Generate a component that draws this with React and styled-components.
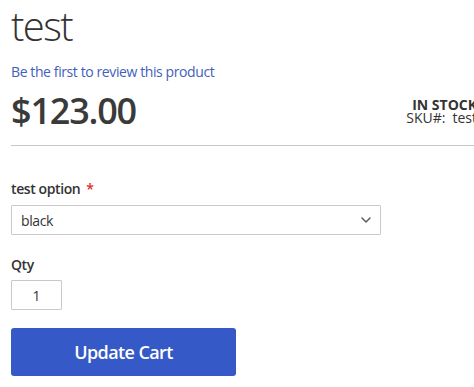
import React from "react";
import styled, { createGlobalStyle } from "styled-components";

const GlobalStyle = createGlobalStyle`
  html, body {
    margin: 0;
    padding: 0;
    background: #fff;
    overflow: hidden;
  }
  body {
    font-family: "Open Sans", "Noto Sans", Arial, sans-serif;
    color: #333;
    font-size: 14px;
    letter-spacing: -0.4px;
  }
`;

const Page = styled.div`
  width: 466px;
  padding: 1px 0 0 11px;
`;

const Title = styled.h1`
  margin: 0;
  font-size: 40px;
  line-height: 50px;
  font-weight: 300;
  letter-spacing: -1.6px;
  color: #333;
`;

const ReviewLink = styled.a`
  display: block;
  margin-top: 11px;
  font-size: 14px;
  line-height: 20px;
  color: #4260bb;
  text-decoration: none;
`;

const PriceRow = styled.div`
  display: flex;
  justify-content: space-between;
  align-items: flex-start;
  padding-bottom: 14px;
  border-bottom: 1px solid #c8c8c8;
`;

const Price = styled.div`
  margin-top: 9px;
  font-size: 36px;
  line-height: 40px;
  font-weight: 600;
  letter-spacing: -1.2px;
  color: #3a3a3a;
`;

const Stock = styled.div`
  padding-top: 16px;
  text-align: right;
  font-size: 14px;
  line-height: 13px;
`;

const StockStatus = styled.div`
  font-weight: 700;
  text-transform: uppercase;
  letter-spacing: 0;
  color: #333;
`;

const Sku = styled.div`
  color: #333;
  letter-spacing: 0;

  span {
    margin-left: 7px;
  }
`;

const Field = styled.div`
  display: flex;
  flex-direction: column;
  align-items: flex-start;
  margin-top: ${(p) => p.$top}px;
`;

const Label = styled.label`
  font-size: 14px;
  line-height: 20px;
  font-weight: 600;
  color: #333;
  margin-bottom: ${(p) => p.$gap}px;

  em {
    font-style: normal;
    color: #e02b27;
    margin-left: 6px;
  }
`;

const SelectWrap = styled.div`
  position: relative;
  width: 370px;
`;

const Select = styled.select`
  appearance: none;
  width: 100%;
  height: 30px;
  margin: 0;
  padding: 0 30px 0 9px;
  border: 1px solid #c9c9c9;
  border-radius: 1px;
  background: #fff;
  font-family: inherit;
  font-size: 14px;
  letter-spacing: inherit;
  color: #333;
  outline: none;
`;

const Chevron = styled.svg`
  position: absolute;
  right: 10px;
  top: 12px;
  pointer-events: none;
`;

const QtyInput = styled.input`
  box-sizing: border-box;
  width: 51px;
  height: 30px;
  margin: 0;
  padding: 0;
  border: 1px solid #c9c9c9;
  border-radius: 1px;
  text-align: center;
  font-family: inherit;
  font-size: 14px;
  color: #333;
  outline: none;
`;

const Button = styled.button`
  margin-top: 18px;
  width: 225px;
  height: 48px;
  border: none;
  border-radius: 3px;
  background: #3559c6;
  color: #fff;
  font-family: inherit;
  font-size: 18px;
  font-weight: 600;
  letter-spacing: -0.6px;
  cursor: pointer;
`;

export default function App() {
  return (
    <>
      <GlobalStyle />
      <Page>
        <Title>test</Title>
        <ReviewLink href="#">Be the first to review this product</ReviewLink>
        <PriceRow>
          <Price>$123.00</Price>
          <Stock>
            <StockStatus>In stock</StockStatus>
            <Sku>
              SKU#:<span>test</span>
            </Sku>
          </Stock>
        </PriceRow>
        <Field $top={33}>
          <Label $gap={6}>
            test option<em>*</em>
          </Label>
          <SelectWrap>
            <Select defaultValue="black">
              <option value="black">black</option>
              <option value="white">white</option>
            </Select>
            <Chevron width="10" height="6" viewBox="0 0 10 6">
              <path
                d="M1 1l4 4 4-4"
                fill="none"
                stroke="#555"
                strokeWidth="1.4"
                strokeLinecap="round"
                strokeLinejoin="round"
              />
            </Chevron>
          </SelectWrap>
        </Field>
        <Field $top={20}>
          <Label $gap={5}>Qty</Label>
          <QtyInput type="text" inputMode="numeric" defaultValue="1" />
        </Field>
        <Button>Update Cart</Button>
      </Page>
    </>
  );
}
